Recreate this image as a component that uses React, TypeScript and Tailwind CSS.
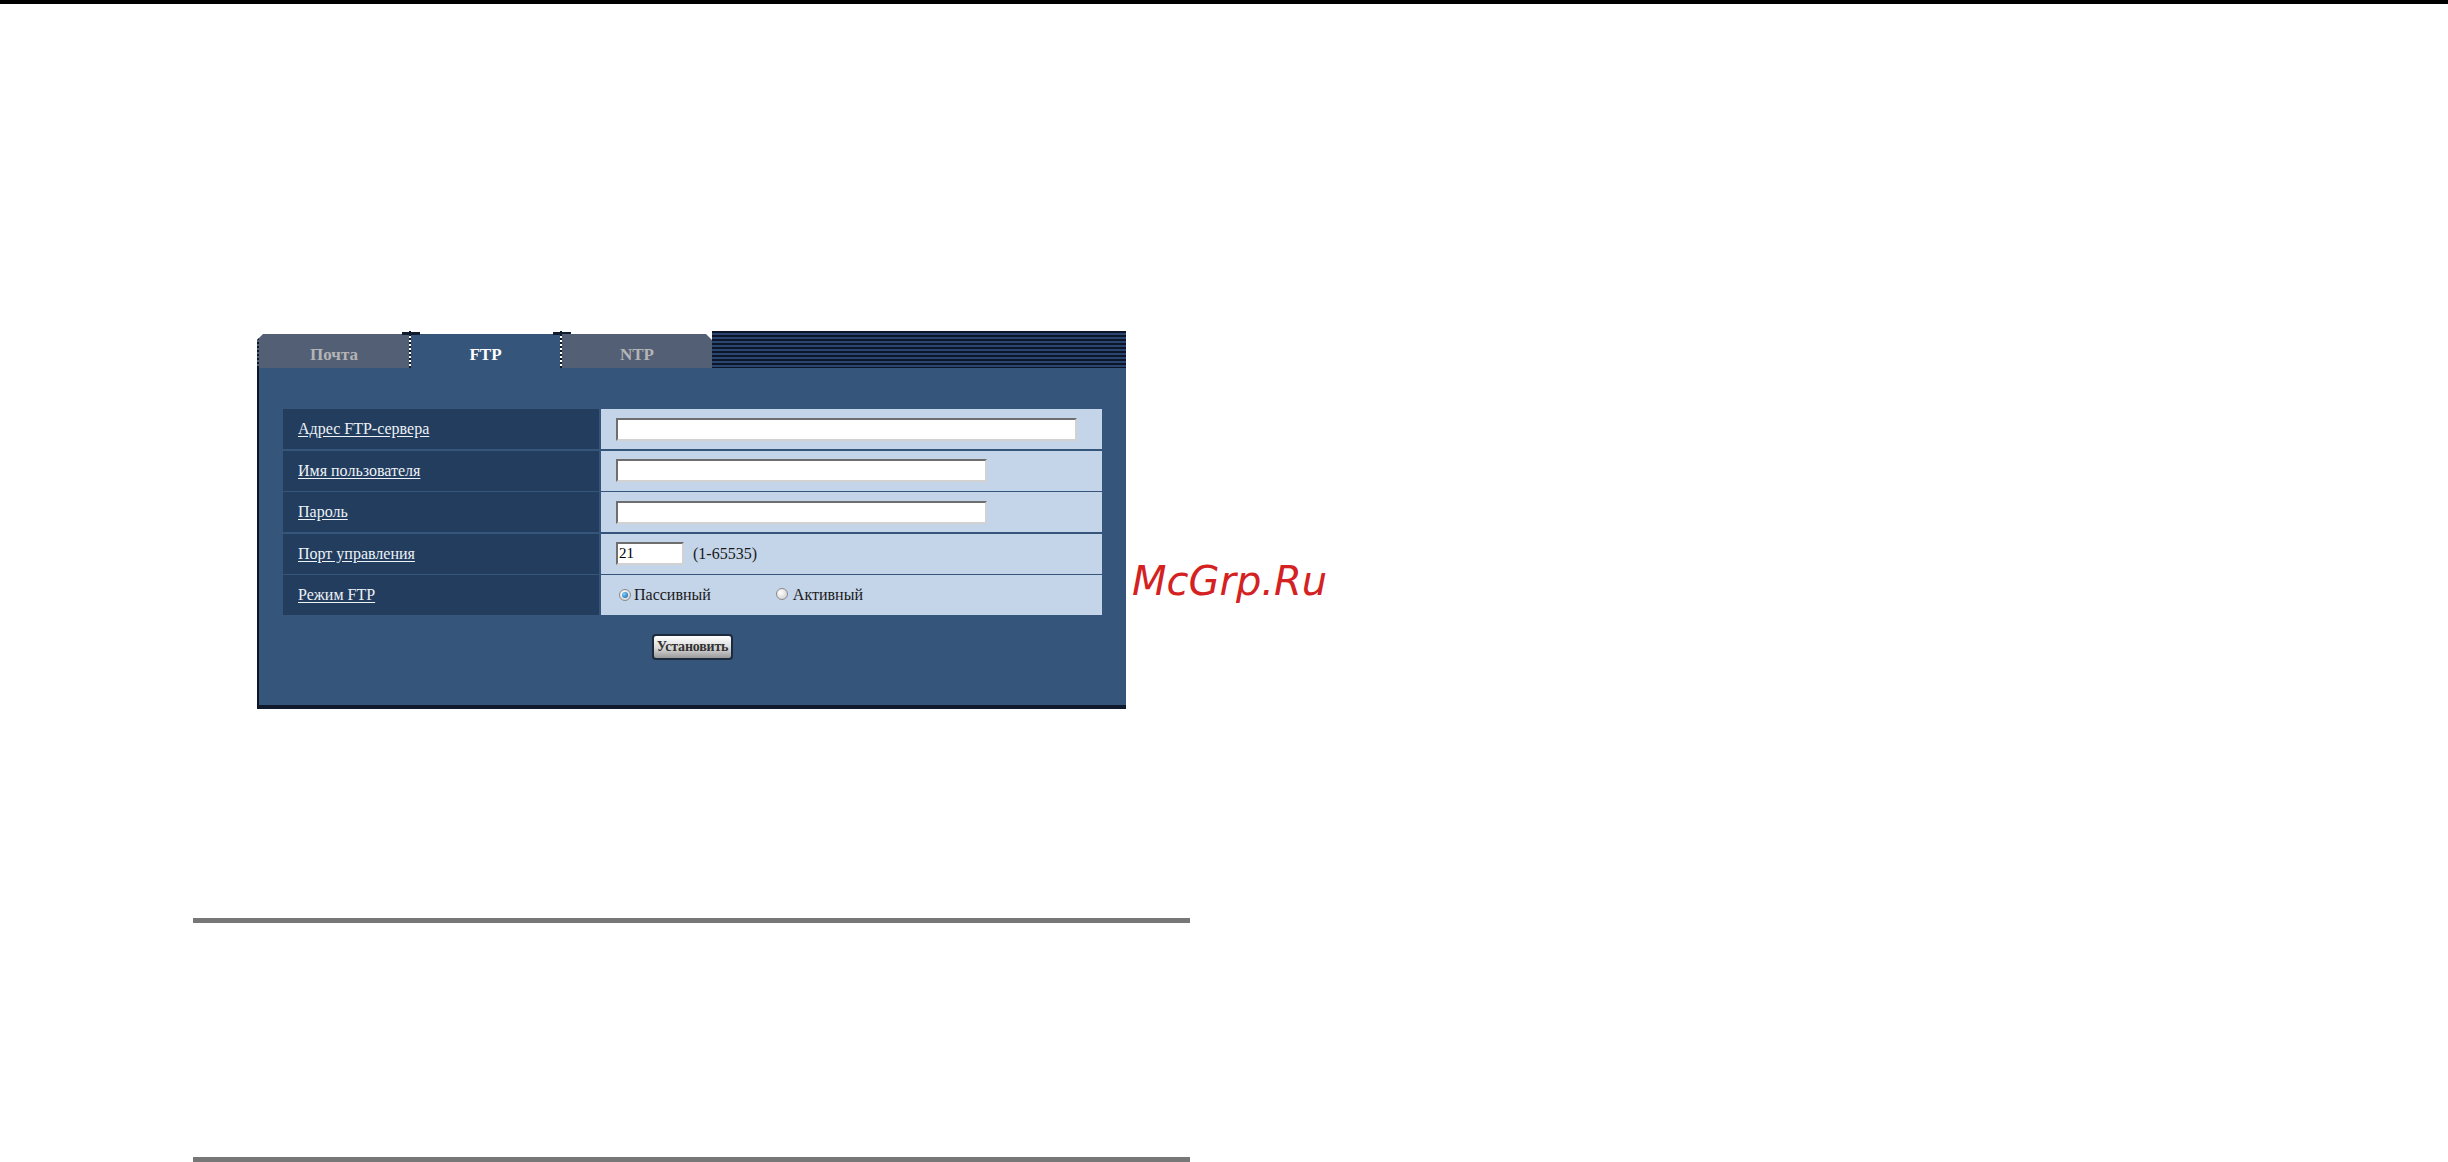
import React from "react";

const rows = [
  { label: "Адрес FTP-сервера", kind: "wide" },
  { label: "Имя пользователя", kind: "mid" },
  { label: "Пароль", kind: "mid" },
  { label: "Порт управления", kind: "port" },
  { label: "Режим FTP", kind: "radio" },
];

const Radio = ({ checked }: { checked?: boolean }) => (
  <span className="inline-flex h-[12px] w-[12px] items-center justify-center rounded-full border border-[#8a8a8a] bg-[radial-gradient(circle_at_35%_35%,#ffffff,#c8c8c8)]">
    {checked && (
      <span className="h-[6px] w-[6px] rounded-full bg-[radial-gradient(circle_at_35%_35%,#7fd0ff,#0a5a9a)]" />
    )}
  </span>
);

const TextBox = ({ w, value }: { w: string; value?: string }) => (
  <div
    className={`${w} h-[23px] border-2 border-t-[#6e6e6e] border-l-[#6e6e6e] border-r-[#d2d2d2] border-b-[#d2d2d2] bg-white pl-[1px] text-[15px] leading-[19px] text-black`}
  >
    {value}
  </div>
);

const Junction = () => (
  <div className="relative w-[2px] self-stretch border-l-2 border-dotted border-[#0c1626]">
    <div className="absolute left-[-9px] top-[1px] h-[3px] w-[18px] bg-[#101c30]" />
  </div>
);

export default function App() {
  return (
    <div className="h-[1162px] overflow-hidden bg-white font-['Liberation_Serif',serif]">
      <div className="h-[4px] bg-black" />

      <div className="mt-[327px] flex items-start">
        <div className="ml-[257px] w-[869px]">
          {/* tabs */}
          <div className="flex h-[37px]">
            <div className="flex items-end">
              <div className="flex h-[34px] w-[152px] justify-center border-l-2 border-dotted border-[#0c1626] bg-[#535f75] pt-[8px] text-[17px] font-bold text-[#b4b4b4] [clip-path:polygon(6px_0,100%_0,100%_100%,0_100%,0_6px)]">
                Почта
              </div>
            </div>
            <Junction />
            <div className="flex items-end">
              <div className="flex h-[34px] w-[149px] justify-center bg-[#36557a] pt-[8px] text-[17px] font-bold text-white">
                FTP
              </div>
            </div>
            <Junction />
            <div className="flex items-end">
              <div className="flex h-[34px] w-[150px] justify-center bg-[#535f75] pt-[8px] text-[17px] font-bold text-[#b4b4b4] [clip-path:polygon(0_0,calc(100%-6px)_0,100%_6px,100%_100%,0_100%)]">
                NTP
              </div>
            </div>
            <div className="flex-1 bg-[repeating-linear-gradient(to_bottom,#0b1729_0px,#0b1729_2px,#2a4670_2px,#2a4670_4px)]" />
          </div>

          {/* content */}
          <div className="border-b-4 border-l-2 border-solid border-b-[#0f1a2c] border-l-[#0c1626] bg-[#36557a] pb-[45px] pl-[24px] pt-[41px]">
            <div className="flex w-[819px] flex-col gap-[1.5px]">
              {rows.map((r) => (
                <div key={r.label} className="flex h-[40px] gap-[2px]">
                  <div className="flex w-[316px] items-center bg-[#223d5e] pl-[15px] text-[16px] text-[#eef2f7] underline underline-offset-2">
                    {r.label}
                  </div>
                  <div className="flex flex-1 items-center bg-[#c5d5e9] pl-[15px] text-[16px] text-[#1a1a1a]">
                    {r.kind === "wide" && <TextBox w="w-[461px]" />}
                    {r.kind === "mid" && <TextBox w="w-[371px]" />}
                    {r.kind === "port" && (
                      <>
                        <TextBox w="w-[68px]" value="21" />
                        <span className="ml-[9px]">(1-65535)</span>
                      </>
                    )}
                    {r.kind === "radio" && (
                      <div className="flex items-center pl-[3px]">
                        <Radio checked />
                        <span className="ml-[3px]">Пассивный</span>
                        <span className="ml-[65px]">
                          <Radio />
                        </span>
                        <span className="ml-[5px]">Активный</span>
                      </div>
                    )}
                  </div>
                </div>
              ))}
            </div>
            <div className="mt-[19px] flex w-[819px] justify-center">
              <button className="h-[26px] w-[81px] rounded-[4px] border-2 border-[#1c2a3e] bg-[linear-gradient(to_bottom,#ffffff,#d8d8d8_55%,#9a9a9a)] p-0 text-[14px] font-bold leading-none tracking-[-0.2px] text-[#333]">
                Установить
              </button>
            </div>
          </div>
        </div>

        <div className="ml-[6px] mt-[230px] font-['DejaVu_Sans',sans-serif] text-[40px] italic leading-[40px] text-[#d42222]">
          McGrp.Ru
        </div>
      </div>

      <div className="ml-[193px] mt-[209px] h-[5px] w-[997px] bg-[#777777]" />
      <div className="ml-[193px] mt-[234px] h-[5px] w-[997px] bg-[#777777]" />
    </div>
  );
}
